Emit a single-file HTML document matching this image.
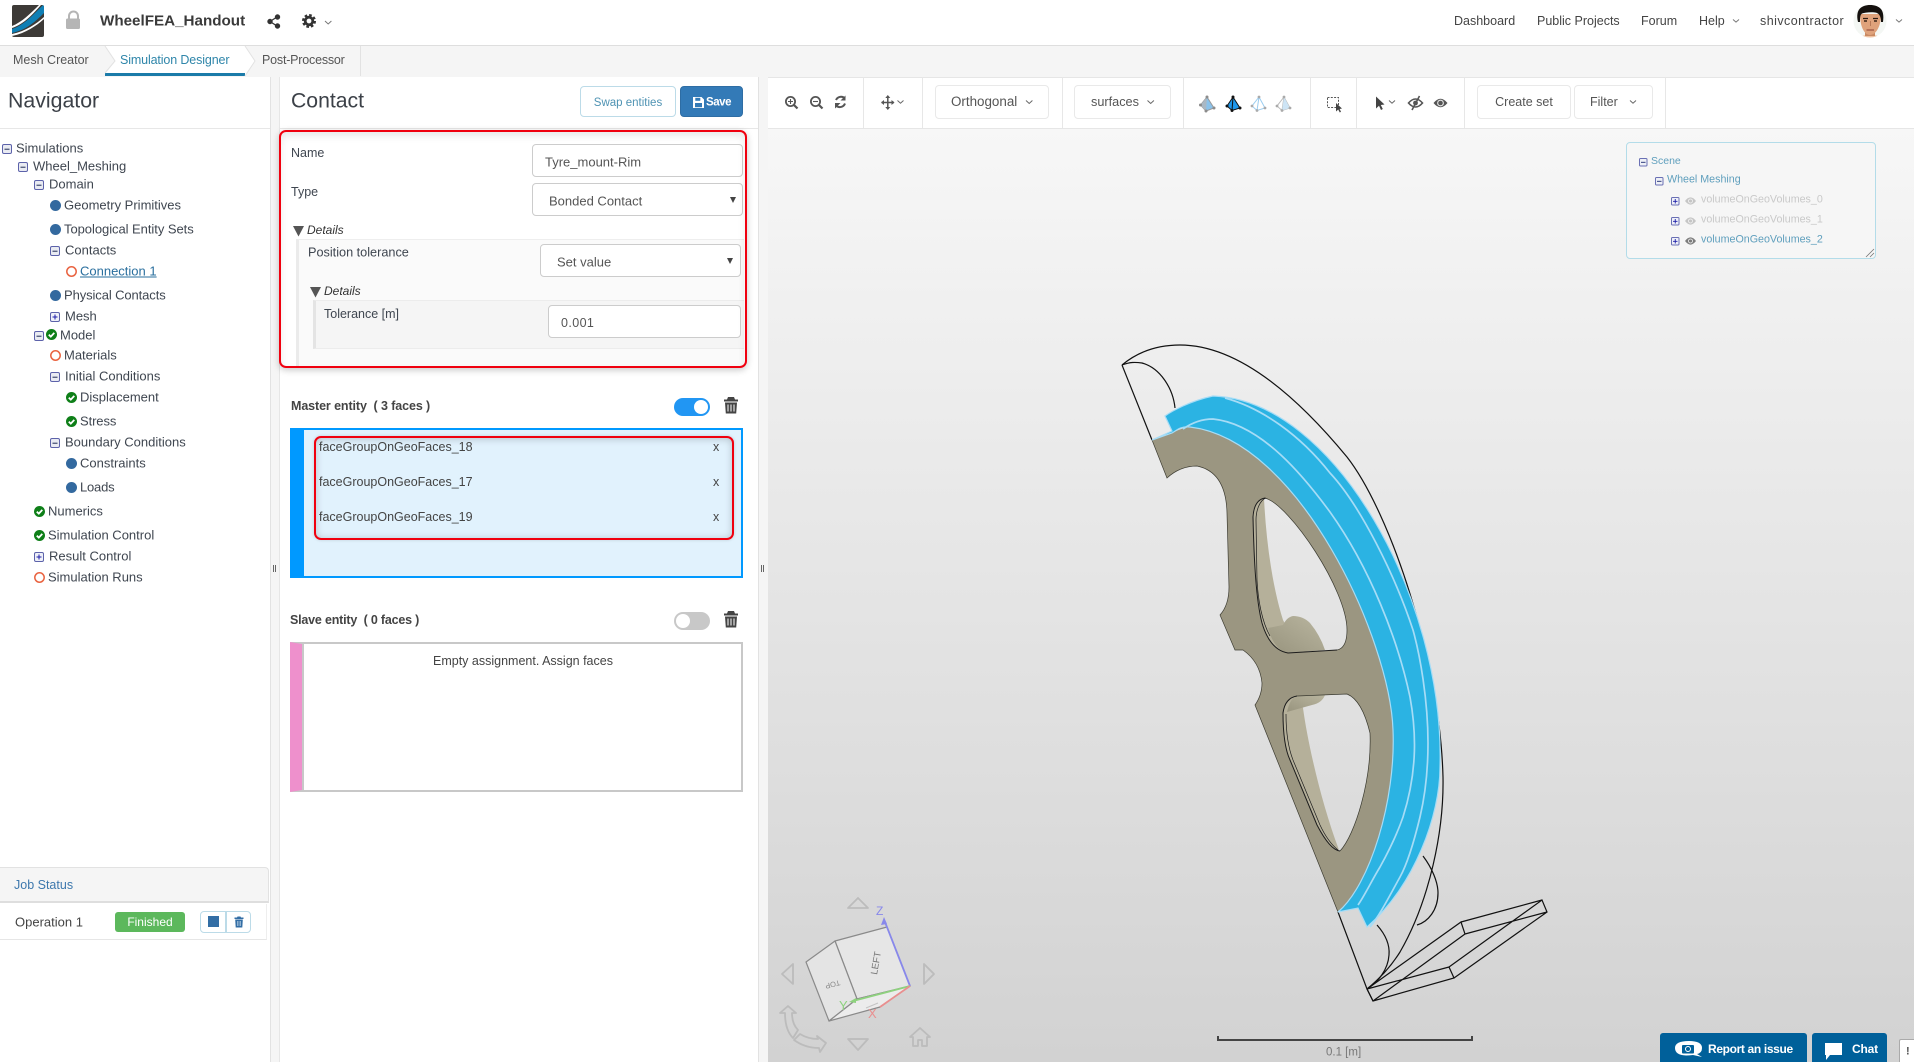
<!DOCTYPE html>
<html><head><meta charset="utf-8"><title>WheelFEA_Handout</title>
<style>
html,body{margin:0;padding:0;width:1914px;height:1062px;overflow:hidden;background:#f5f5f5;font-family:"Liberation Sans",sans-serif;color:#444}
#root{position:absolute;left:0;top:0;width:1914px;height:1062px;overflow:hidden}
.a{position:absolute;box-sizing:border-box}
.t{position:absolute;white-space:nowrap;transform:translateY(-50%);line-height:1;font-size:13px;color:#3f4650}
.h{font-size:12.5px;color:#444}
.inp{position:absolute;box-sizing:border-box;background:#fff;border:1px solid #ccc;border-radius:4px}
.btn{position:absolute;box-sizing:border-box;background:#fff;border:1px solid #e9e9e9;border-radius:4px;font-size:13px;color:#555;text-align:center}
.sep{position:absolute;top:77px;width:1px;height:51px;background:#e7e7e7}
.red{position:absolute;box-sizing:border-box;border:2px solid #f0000f;border-radius:7px}
svg{position:absolute;overflow:visible}
</style></head>
<body>
<div id="root">
<!-- header -->
<div class="a" style="left:0;top:0;width:1914px;height:46px;background:#fff;border-bottom:1px solid #dedede"></div>
<svg style="left:0;top:0" width="1914" height="77">
  <defs>
    <clipPath id="lg"><rect x="12" y="5" width="32" height="32" rx="2"/></clipPath>
    <clipPath id="av"><circle cx="1870" cy="21" r="16.5"/></clipPath>
  </defs>
  <g clip-path="url(#lg)">
    <rect x="12" y="5" width="32" height="32" fill="#3d3a37"/>
    <path d="M12 29 C24 25 32 16 44 4 L44 13 C35 22 26 30 12 33Z" fill="#0f7fb5"/>
    <path d="M12 26 C22 22 30 14 39 5 L41 5 C32 15 24 24 12 28Z" fill="#fff"/>
    <path d="M12 34 C26 31 36 24 44 17 L44 19 C36 26 26 33 12 36Z" fill="#fff"/>
  </g>
  <path d="M69 19 V16 a4.5 4.5 0 0 1 9 0 V19" fill="none" stroke="#b5b5b5" stroke-width="2"/>
  <rect x="66" y="18.5" width="14" height="10.5" rx="1.5" fill="#b5b5b5"/>
  <g fill="#333" stroke="#333">
    <circle cx="277.5" cy="17" r="2.2"/><circle cx="277.5" cy="26" r="2.2"/><circle cx="270" cy="21.5" r="2.2"/>
    <path d="M277 17 L270 21.5 L277 26" fill="none" stroke-width="1.3"/>
  </g>
  <circle cx="309" cy="21" r="3.8" fill="none" stroke="#333" stroke-width="2.8"/>
  <circle cx="309" cy="21" r="5.8" fill="none" stroke="#333" stroke-width="2.4" stroke-dasharray="2.6 1.95"/>
  <path d="M325 21 l3.2 3 l3.2 -3" fill="none" stroke="#777" stroke-width="1"/>
  <path d="M1733 19.5 l3 2.6 l3 -2.6" fill="none" stroke="#777" stroke-width="1"/>
  <path d="M1896 19.5 l3 2.6 l3 -2.6" fill="none" stroke="#777" stroke-width="1"/>
  <!-- avatar -->
  <circle cx="1870" cy="21" r="16.5" fill="#f4f7f4"/>
  <g clip-path="url(#av)">
    <path d="M1855 38 Q1870 32 1885 38 L1885 40 H1855Z" fill="#f0c3a2"/>
    <path d="M1865 30 H1875 V36 H1865Z" fill="#c98a63"/>
    <path d="M1860 14 C1860 28 1865 35 1870 35 C1875 35 1881 28 1881 14 Z" fill="#dfa27b"/>
    <path d="M1858 22 C1855 9 1862 5 1870 5 C1879 5 1885 9 1883 22 L1881 22 C1881 16 1879 13 1875 12.5 C1870 12 1865 12.5 1862 13.5 C1860 15 1860 18 1860 22Z" fill="#15110e"/>
    <path d="M1863 18.5 h5 M1873 18.500 h5" stroke="#2a1b12" stroke-width="1.3"/>
    <path d="M1864 21 h3 M1874 21 h3" stroke="#3a2518" stroke-width="1.4"/>
    <path d="M1870.500 21 V26" stroke="#b87a58" stroke-width="1"/>
    <path d="M1866.500 30 h7.500" stroke="#9c5442" stroke-width="1.2"/>
  </g>
</svg>
<div class="t" style="left:100px;top:21px;font-size:15.2px;font-weight:bold;color:#3a3a3a">WheelFEA_Handout</div>
<div class="t h" style="left:1454px;top:21px">Dashboard</div>
<div class="t h" style="left:1537px;top:21px">Public Projects</div>
<div class="t h" style="left:1641px;top:21px">Forum</div>
<div class="t h" style="left:1699px;top:21px">Help</div>
<div class="t h" style="left:1760px;top:21px;letter-spacing:.45px">shivcontractor</div>

<!-- tabs -->
<div class="a" style="left:105px;top:46px;width:140px;height:30px;background:#fff;border-bottom:3px solid #1b7ba9"></div>
<svg style="left:0;top:46px" width="380" height="30">
  <path d="M105 0 L115 15 L105 27" fill="#f5f5f5" stroke="#e2e2e2"/>
  <path d="M245 0 L255 15 L245 30" fill="#fff" stroke="#e2e2e2"/>
  <path d="M360.5 0 V30" stroke="#e2e2e2"/>
</svg>
<div class="t" style="left:13px;top:60px;font-size:12.5px;color:#555">Mesh Creator</div>
<div class="t" style="left:120px;top:60px;font-size:12.5px;color:#2f86aa;letter-spacing:-.13px">Simulation Designer</div>
<div class="t" style="left:262px;top:60px;font-size:12.5px;color:#555;letter-spacing:-.2px">Post-Processor</div>

<!-- navigator panel -->
<div class="a" style="left:0;top:77px;width:271px;height:985px;background:#fff;border-right:1px solid #e2e2e2"></div>
<div class="a" style="left:0;top:128px;width:270px;height:1px;background:#e7e7e7"></div>
<div class="t" style="left:8px;top:101px;font-size:21.3px;color:#3c4148">Navigator</div>

<svg style="left:0;top:0" width="280" height="600">
<defs>
  <g id="mn"><rect x="0.5" y="0.5" width="9" height="9" rx="1.5" fill="#e9ebf2" stroke="#5c62aa"/><path d="M2.5 5.2 H7.5" stroke="#1e2a55" stroke-width="1"/></g>
  <g id="pl"><rect x="0.5" y="0.5" width="9" height="9" rx="1.5" fill="#eef0f8" stroke="#5c62aa"/><path d="M2.5 5 H7.5 M5 2.5 V7.5" stroke="#1c1ca8" stroke-width="1"/></g>
  <circle id="dot" cx="5.5" cy="5.5" r="5.5" fill="#33699f"/>
  <g id="ok"><circle cx="5.5" cy="5.5" r="5.5" fill="#0e7f18"/><path d="M2.8 5.7 L4.800 7.600 L8.300 3.900" fill="none" stroke="#fff" stroke-width="1.8"/></g>
  <circle id="rg" cx="5.5" cy="5.5" r="4.7" fill="none" stroke="#e9623f" stroke-width="1.5"/>
</defs>
<use href="#mn" x="2" y="144"/>
<use href="#mn" x="18" y="162"/>
<use href="#mn" x="34" y="180"/>
<use href="#dot" x="50" y="200"/>
<use href="#dot" x="50" y="224"/>
<use href="#mn" x="50" y="246"/>
<use href="#rg" x="66" y="266"/>
<use href="#dot" x="50" y="290"/>
<use href="#pl" x="50" y="312"/>
<use href="#mn" x="34" y="331"/>
<use href="#ok" x="46" y="329"/>
<use href="#rg" x="50" y="350"/>
<use href="#mn" x="50" y="372"/>
<use href="#ok" x="66" y="392"/>
<use href="#ok" x="66" y="416"/>
<use href="#mn" x="50" y="438"/>
<use href="#dot" x="66" y="458"/>
<use href="#dot" x="66" y="482"/>
<use href="#ok" x="34" y="506"/>
<use href="#ok" x="34" y="530"/>
<use href="#pl" x="34" y="552"/>
<use href="#rg" x="34" y="572"/>
</svg>
<div class="t" style="left:16px;top:148px">Simulations</div>
<div class="t" style="left:33px;top:166px">Wheel_Meshing</div>
<div class="t" style="left:49px;top:184px">Domain</div>
<div class="t" style="left:64px;top:205px">Geometry Primitives</div>
<div class="t" style="left:64px;top:229px;letter-spacing:-.05px">Topological Entity Sets</div>
<div class="t" style="left:65px;top:250px">Contacts</div>
<div class="t" style="left:80px;top:271px;color:#2a6f9e;text-decoration:underline">Connection 1</div>
<div class="t" style="left:64px;top:295px;letter-spacing:-.1px">Physical Contacts</div>
<div class="t" style="left:65px;top:316px">Mesh</div>
<div class="t" style="left:60px;top:335px">Model</div>
<div class="t" style="left:64px;top:355px">Materials</div>
<div class="t" style="left:65px;top:376px">Initial Conditions</div>
<div class="t" style="left:80px;top:397px">Displacement</div>
<div class="t" style="left:80px;top:421px;letter-spacing:-.1px">Stress</div>
<div class="t" style="left:65px;top:442px">Boundary Conditions</div>
<div class="t" style="left:80px;top:463px">Constraints</div>
<div class="t" style="left:80px;top:487px;letter-spacing:-.2px">Loads</div>
<div class="t" style="left:48px;top:511px">Numerics</div>
<div class="t" style="left:48px;top:535px">Simulation Control</div>
<div class="t" style="left:49px;top:556px">Result Control</div>
<div class="t" style="left:48px;top:577px">Simulation Runs</div>

<!-- job status -->
<div class="a" style="left:0;top:867px;width:269px;height:36px;background:#f5f5f5;border:1px solid #e2e2e2;border-left:0;border-bottom:2px solid #dedede;border-top-right-radius:4px"></div>
<div class="t" style="left:14px;top:885px;font-size:12.5px;color:#3d78ad">Job Status</div>
<div class="a" style="left:0;top:904px;width:267px;height:36px;border-right:1px solid #eee;border-bottom:1px solid #e6e6e6"></div>
<div class="t" style="left:15px;top:922px;font-size:13px;color:#444">Operation 1</div>
<div class="a" style="left:115px;top:912px;width:70px;height:20px;background:#5cb85c;border-radius:3px;color:#fff;font-size:12px;text-align:center;line-height:21px">Finished</div>
<div class="a" style="left:200px;top:911px;width:26px;height:22px;border:1px solid #bcdbe8;border-radius:4px 0 0 4px;background:#fff"></div>
<div class="a" style="left:226px;top:911px;width:25px;height:22px;border:1px solid #bcdbe8;border-radius:0 4px 4px 0;background:#fff"></div>
<div class="a" style="left:208px;top:916px;width:11px;height:11px;background:#336ea5"></div>
<svg style="left:234px;top:916px" width="10" height="12"><path d="M3 1.5 L3.5 0.5 H6.5 L7 1.5 H9.5 V3 H.5 V1.5Z M1.2 3.5 H8.8 L8.3 11.5 H1.7Z" fill="#336ea5"/><path d="M3.5 5 V10 M5 5 V10 M6.5 5 V10" stroke="#cfe0ee" stroke-width=".6"/></svg>

<!-- splitter handles -->
<svg style="left:0;top:0" width="780" height="600">
  <path d="M273.5 565 V572 M275.500 565 V572 M761.5 565 V572 M763.5 565 V572" stroke="#666" stroke-width="1"/>
</svg>

<!-- contact panel -->
<div class="a" style="left:279px;top:77px;width:480px;height:985px;background:#fff;border-left:1px solid #e6e6e6;border-right:1px solid #e2e2e2"></div>
<div class="a" style="left:280px;top:128px;width:478px;height:1px;background:#e7e7e7"></div>
<div class="t" style="left:291px;top:101px;font-size:21.2px;color:#3c4148">Contact</div>
<div class="btn" style="left:580px;top:86px;width:96px;height:31px;border:1px solid #bcdbe8;font-size:11.5px;line-height:32px;color:#4f93b3">Swap entities</div>
<div class="a" style="left:680px;top:86px;width:63px;height:31px;background:#337ab7;border-radius:4px;border:1px solid #2e6da4"></div>
<svg style="left:693px;top:97px" width="11" height="11"><path d="M0 0 H8.5 L11 2.5 V11 H0Z" fill="#fff"/><rect x="2.3" y="0.8" width="5" height="3" fill="#337ab7"/><rect x="2" y="6" width="7" height="4.2" fill="#337ab7"/></svg>
<div class="t" style="left:706px;top:103px;font-size:11.5px;color:#fff;font-weight:bold;letter-spacing:-.45px">Save</div>

<!-- form -->
<div class="a" style="left:296px;top:239px;width:448px;height:128px;background:#fafafa;border-top:1px solid #eee;border-left:3px solid #ebebeb"></div>
<div class="a" style="left:313px;top:300px;width:431px;height:49px;background:#f5f5f5;border-top:1px solid #ececec;border-bottom:1px solid #ececec;border-left:3px solid #e4e4e4"></div>
<div class="t" style="left:291px;top:153px;font-size:12.5px">Name</div>
<div class="inp" style="left:532px;top:144px;width:211px;height:33px"></div>
<div class="t" style="left:545px;top:162px;font-size:13px;color:#555">Tyre_mount-Rim</div>
<div class="t" style="left:291px;top:192px;font-size:12.5px">Type</div>
<div class="inp" style="left:532px;top:183px;width:211px;height:33px"></div>
<div class="t" style="left:549px;top:201px;font-size:13px;color:#555">Bonded Contact</div>
<svg style="left:0;top:0" width="780" height="360">
  <path d="M730 197 h6 l-3 6z" fill="#444"/>
  <path d="M293 226 h11 l-5.5 10.5z" fill="#555"/>
  <path d="M310 287 h11 l-5.5 10.5z" fill="#555"/>
</svg>
<div class="t" style="left:307px;top:230px;font-size:12px;font-style:italic;color:#333">Details</div>
<div class="t" style="left:308px;top:253px;font-size:12.7px">Position tolerance</div>
<div class="inp" style="left:540px;top:244px;width:201px;height:33px"></div>
<div class="t" style="left:557px;top:262px;font-size:13px;color:#555">Set value</div>
<svg style="left:0;top:0" width="780" height="360"><path d="M727 258 h6 l-3 6z" fill="#444"/></svg>
<div class="t" style="left:324px;top:291px;font-size:12px;font-style:italic;color:#333">Details</div>
<div class="t" style="left:324px;top:314px;font-size:12.5px">Tolerance [m]</div>
<div class="inp" style="left:548px;top:305px;width:193px;height:33px"></div>
<div class="t" style="left:561px;top:323px;font-size:12.5px;color:#555;letter-spacing:.4px">0.001</div>
<div class="red" style="left:279px;top:130px;width:468px;height:238px;box-shadow:0 2px 7px rgba(0,0,0,.22),inset 0 4px 8px rgba(0,0,0,.09)"></div>

<!-- master -->
<div class="t" style="left:291px;top:406px;font-size:12.5px;font-weight:bold;color:#444;letter-spacing:-.1px">Master entity &nbsp;( 3 faces )</div>
<div class="a" style="left:674px;top:398px;width:36px;height:18px;border-radius:9px;background:#2196f3"></div>
<div class="a" style="left:694px;top:400px;width:14px;height:14px;border-radius:50%;background:#fff"></div>
<svg style="left:0;top:0" width="780" height="640">
  <g id="tr"><path d="M727 399.5 L728 397 H734 L735 399.5 H738 V401.5 H724 V399.5Z M725 402.5 H737 L736.2 413.5 H725.8Z" fill="#444"/><path d="M728 404.5 V411.5 M731 404.5 V411.5 M734 404.5 V411.5" stroke="#fff" stroke-width="1"/></g>
  <use href="#tr" x="0" y="214"/>
</svg>
<div class="a" style="left:290px;top:428px;width:453px;height:150px;background:#e1f2fd;border:2px solid #0099ff;border-left:14px solid #0099ff"></div>
<div class="t" style="left:319px;top:447px;font-size:12.5px;color:#444">faceGroupOnGeoFaces_18</div>
<div class="t" style="left:319px;top:482px;font-size:12.5px;color:#444">faceGroupOnGeoFaces_17</div>
<div class="t" style="left:319px;top:517px;font-size:12.5px;color:#444">faceGroupOnGeoFaces_19</div>
<div class="t" style="left:713px;top:447px;font-size:12.5px;color:#444">x</div>
<div class="t" style="left:713px;top:482px;font-size:12.5px;color:#444">x</div>
<div class="t" style="left:713px;top:517px;font-size:12.5px;color:#444">x</div>
<div class="red" style="left:314px;top:436px;width:420px;height:104px;box-shadow:inset 0 1px 8px rgba(0,0,0,.2),0 0 3px rgba(0,0,0,.15)"></div>

<!-- slave -->
<div class="t" style="left:290px;top:620px;font-size:12.5px;font-weight:bold;color:#444;letter-spacing:-.2px">Slave entity &nbsp;( 0 faces )</div>
<div class="a" style="left:674px;top:612px;width:36px;height:18px;border-radius:9px;background:#c8c8c8"></div>
<div class="a" style="left:676px;top:614px;width:14px;height:14px;border-radius:50%;background:#fff"></div>
<div class="a" style="left:290px;top:642px;width:453px;height:150px;background:#fff;border:2px solid #c8c8c8;border-left:12px solid #ee90cc"></div>
<div class="a" style="left:302px;top:642px;width:2px;height:150px;background:#c8c8c8"></div>
<div class="t" style="left:433px;top:661px;font-size:12.5px;color:#444">Empty assignment. Assign faces</div>

<!-- viewer -->
<div class="a" style="left:768px;top:77px;width:1146px;height:52px;background:#fff;border-top:1px solid #e6e6e6;border-bottom:1px solid #e6e6e6"></div>
<div class="a" style="left:768px;top:129px;width:1146px;height:933px;background:linear-gradient(#f7f7f7,#d2d2d2)"></div>
<div class="sep" style="left:863px"></div><div class="sep" style="left:922px"></div><div class="sep" style="left:1062px"></div><div class="sep" style="left:1183px"></div><div class="sep" style="left:1310px"></div><div class="sep" style="left:1356px"></div><div class="sep" style="left:1464px"></div><div class="sep" style="left:1665px"></div>
<div class="btn" style="left:935px;top:85px;width:114px;height:34px;line-height:32px;text-align:left;padding-left:15px;font-size:13.4px">Orthogonal</div>
<div class="btn" style="left:1074px;top:85px;width:97px;height:34px;line-height:32px;text-align:left;padding-left:16px;font-size:12.7px">surfaces</div>
<div class="btn" style="left:1477px;top:85px;width:94px;height:34px;line-height:32px;font-size:12.5px">Create set</div>
<div class="btn" style="left:1574px;top:85px;width:79px;height:34px;line-height:32px;text-align:left;padding-left:15px;font-size:12.5px">Filter</div>
<svg style="left:0;top:0" width="1914" height="130">
  <g fill="none" stroke="#555" stroke-width="1.8">
    <circle cx="790.5" cy="101.5" r="4.6"/><path d="M794 105 L797.5 108.5" stroke-width="2.2"/><path d="M788 101.500 h5 M790.5 99 v5" stroke-width="1.1"/>
    <circle cx="815.5" cy="101.5" r="4.6"/><path d="M819 105 L822.5 108.5" stroke-width="2.2"/><path d="M813 101.5 h5" stroke-width="1.1"/>
    <path d="M836 100 a5.5 5.5 0 0 1 9 -1.5 M845 103.5 a5.5 5.5 0 0 1 -9 2" stroke-width="2"/>
  </g>
  <path d="M845.5 95.5 V100.5 H840.5Z M835 108.5 V103 H840.5Z" fill="#555"/>
  <g stroke="#555" stroke-width="1.5" fill="#555">
    <path d="M881.5 102.5 H894 M887.8 96 V109" fill="none"/>
    <path d="M887.8 95 l-2.500 3 h5z M887.8 110 l-2.500 -3 h5z M881 102.5 l3 -2.5 v5z M894.5 102.5 l-3 -2.5 v5z" stroke="none"/>
  </g>
  <g fill="none" stroke="#666" stroke-width="1">
    <path d="M897.5 100.5 l3 2.7 l3 -2.7"/>
    <path d="M1026 100.5 l3.2 3 l3.2 -3"/>
    <path d="M1147.5 100.5 l3.2 3 l3.2 -3"/>
    <path d="M1630 100.5 l3 2.7 l3 -2.7"/>
    <path d="M1389 100.5 l3 2.7 l3 -2.7"/>
  </g>
  <!-- tetra view icons -->
  <path d="M1207 97 L1200.500 105 L1206 111 L1214 108Z" fill="#8bc2ea" stroke="#9a9a9a"/>
  <path d="M1207 97 L1200.500 105 L1206 111Z" fill="#aab8c4"/>
  <g fill="#8c8c8c"><circle cx="1207" cy="97" r="1.5"/><circle cx="1200.500" cy="105" r="1.5"/><circle cx="1214" cy="108" r="1.5"/><circle cx="1206" cy="111" r="1.5"/></g>
  <path d="M1233 97 L1227 106 L1232 110.500 L1240 108Z" fill="#1f97ea" stroke="#111"/>
  <path d="M1233 97 L1232 110.500" stroke="#111" fill="none"/>
  <g fill="#111"><circle cx="1233" cy="97" r="1.5"/><circle cx="1227" cy="106" r="1.5"/><circle cx="1240" cy="108" r="1.5"/><circle cx="1232" cy="110.5" r="1.5"/></g>
  <path d="M1259 97 L1252 106 L1257 110.5 L1265 108Z M1259 97 L1257 110.5" fill="none" stroke="#9bcdf0"/>
  <g fill="#aaa"><circle cx="1259" cy="97" r="1.4"/><circle cx="1252" cy="106" r="1.4"/><circle cx="1265" cy="108" r="1.4"/><circle cx="1257" cy="110.5" r="1.4"/></g>
  <path d="M1284 97 L1277 106 L1282 110.5 L1290 108Z M1284 97 L1282 110.5" fill="none" stroke="#b9b9b9"/>
  <path d="M1284 97 L1290 108 L1282 110.5Z" fill="#cde4f5"/>
  <g fill="#aaa"><circle cx="1284" cy="97" r="1.4"/><circle cx="1277" cy="106" r="1.4"/><circle cx="1290" cy="108" r="1.4"/><circle cx="1282" cy="110.5" r="1.4"/></g>
  <!-- select -->
  <rect x="1327.5" y="97.5" width="11" height="10" fill="none" stroke="#555" stroke-dasharray="2 1.3"/>
  <path d="M1336 103 L1336 111.5 L1338.2 109.5 L1339.8 112.5 L1341 111.8 L1339.6 109 L1342 108.5Z" fill="#444"/>
  <path d="M1376 96.5 V108.5 L1379 105.8 L1381 110 L1382.8 109 L1380.8 105 L1384.5 104.5Z" fill="#444"/>
  <!-- eyes -->
  <path d="M1408.5 103 Q1415.5 95 1422.5 103 Q1415.5 111 1408.5 103Z" fill="none" stroke="#555" stroke-width="1.6"/>
  <circle cx="1415.5" cy="103" r="2.4" fill="#555"/>
  <path d="M1419.5 96 L1412 110" stroke="#555" stroke-width="1.6"/>
  <path d="M1433.5 103 Q1440.5 94.5 1447.5 103 Q1440.5 111.5 1433.5 103Z" fill="#555"/>
  <circle cx="1440.5" cy="103" r="3.4" fill="#e8e8e8"/><circle cx="1440.5" cy="103" r="2.3" fill="#555"/>
</svg>

<!-- scene tree -->
<div class="a" style="left:1626px;top:142px;width:250px;height:117px;border:1px solid #b3dce9;border-radius:4px;background:#f6f6f6"></div>
<div class="t" style="left:1651px;top:161px;font-size:10.5px;color:#5f9fbd">Scene</div>
<div class="t" style="left:1667px;top:180px;font-size:10.7px;color:#5f9fbd">Wheel Meshing</div>
<div class="t" style="left:1701px;top:200px;font-size:10.7px;color:#c9c9c9">volumeOnGeoVolumes_0</div>
<div class="t" style="left:1701px;top:220px;font-size:10.7px;color:#c9c9c9">volumeOnGeoVolumes_1</div>
<div class="t" style="left:1701px;top:240px;font-size:10.7px;color:#5f9fbd">volumeOnGeoVolumes_2</div>
<svg style="left:0;top:0" width="1914" height="270">
  <defs>
    <g id="sm"><rect x=".5" y=".5" width="7.5" height="7.5" rx="1" fill="#eef0f6" stroke="#6a70b4"/><path d="M2 4.3 H6.5" stroke="#1c2a70" stroke-width=".9"/></g>
    <g id="sp"><rect x=".5" y=".5" width="7.5" height="7.5" rx="1" fill="#eef0f8" stroke="#6a70b4"/><path d="M2 4.3 H6.5 M4.25 2 V6.5" stroke="#1c1ca8" stroke-width=".9"/></g>
    <g id="ey"><path d="M0 4 Q5.5 -3.2 11 4 Q5.5 11.200 0 4Z" fill="currentColor"/><circle cx="5.5" cy="4" r="2.4" fill="#f4f4f4"/><circle cx="5.5" cy="4" r="1.6" fill="currentColor"/></g>
  </defs>
  <use href="#sm" x="1639" y="158"/>
  <use href="#sm" x="1655" y="177"/>
  <use href="#sp" x="1671" y="197"/>
  <use href="#sp" x="1671" y="217"/>
  <use href="#sp" x="1671" y="237"/>
  <use href="#ey" x="1685" y="197" style="color:#c6c6c6"/>
  <use href="#ey" x="1685" y="217" style="color:#c6c6c6"/>
  <use href="#ey" x="1685" y="237" style="color:#7d7d7d"/>
  <path d="M1866 257 L1874 249 M1870 257 L1874 253" stroke="#777" stroke-width=".8"/>
</svg>

<!-- wheel -->
<svg style="left:0;top:0" width="1914" height="1062">
  <defs>
    <linearGradient id="hub" x1="0" y1="1" x2="1" y2="0"><stop offset="0" stop-color="#98947e"/><stop offset="1" stop-color="#bab6a0"/></linearGradient>
  </defs>
  <!-- wireframe -->
  <g fill="none" stroke="#111" stroke-width="1.2">
    <path d="M1122 365 C1140 350 1160 345 1180 345 C1240 345 1300 400 1347 457 C1390 512 1440 660 1443 777 C1444 830 1430 900 1400 952 C1390 968 1378 980 1367 989"/>
    <path d="M1122 365 C1130 362 1135 362 1142 363 C1160 368 1173 388 1175 408"/>
    <path d="M1122 365 L1152 440"/>
    <path d="M1338 912 L1367 989 L1373 1001"/>
    <path d="M1423 856 C1432 868 1438 882 1438 893 C1438 910 1428 922 1417 925"/>
    <path d="M1377 925 C1385 934 1390 944 1389 955 C1388 970 1378 982 1367 989"/>
    <path d="M1367 989 L1373 1001 L1454 978 L1449 967 L1367 989 M1367 989 L1461 922 L1465 934 L1373 1001 M1449 967 L1542 900 L1547 912 L1454 978 M1461 922 L1542 900 M1465 934 L1547 912"/>
  </g>
  <!-- tan face with holes -->
  <path fill-rule="evenodd" fill="#9b9681" d="M1152 440 L1172 433 C1176 431 1182 428 1190 427 C1300 440 1390 640 1393 730 C1396 800 1370 885 1338 912 L1255 705 Q1262 695 1262 683 Q1260 662 1243 650 L1235 650 L1220 615 Q1229 605 1229 587 L1227 513 Q1226 472 1197 466 Q1180 466 1167 478 Z
   M1265 498 C1290 505 1347 590 1347 630 Q1347 648 1337 650 L1288 653 Q1270 650 1262 623 C1256 600 1254 560 1253 517 Q1254 500 1265 498Z
   M1297 696 L1347 694 Q1362 700 1370 733 C1372 780 1355 835 1340 851 Q1330 850 1317 825 L1290 760 Q1283 745 1283 713 Q1285 698 1297 696Z"/>
  <!-- inner walls -->
  <path fill="#b5b09a" d="M1264 498 C1266 540 1272 585 1283 620 L1300 652 L1288 653 Q1270 650 1262 623 C1256 600 1254 560 1253 517 Q1254 500 1264 498Z"/>
  <path fill="url(#hub)" d="M1268 628 L1283 625 Q1287 617 1293 616 Q1303 616 1310 623 Q1320 635 1325 650 L1288 653 Q1274 650 1268 628Z"/>
  <path fill="#b5b09a" d="M1303 708 C1308 745 1322 805 1339 850 Q1330 850 1317 825 L1290 760 Q1283 745 1283 713 Q1285 698 1297 696Z"/>
  <path fill="url(#hub)" d="M1287 712 Q1290 698 1297 696 L1325 695 Q1322 703 1312 705Z"/>
  <g fill="none" stroke="#1c1c1c" stroke-width="1">
    <path d="M1337 650 L1288 653 Q1270 650 1262 623 C1256 600 1254 560 1253 517 Q1254 500 1265 498"/>
    <path d="M1265 498 C1290 505 1347 590 1347 630 Q1347 648 1337 650" stroke="#3a3a30" stroke-width=".7"/>
    <path d="M1266 498 C1260 500 1256 510 1256 520 L1257 580 C1258 600 1262 622 1270 636" stroke-width=".7"/>
    <path d="M1340 851 Q1330 850 1317 825 L1290 760 Q1283 745 1283 713 Q1285 698 1297 696"/>
    <path d="M1297 696 L1347 694 Q1362 700 1370 733 C1372 780 1355 835 1340 851" stroke="#3a3a30" stroke-width=".7"/>
    <path d="M1286 714 Q1286 742 1293 760 L1320 825 Q1328 842 1338 850" stroke-width=".7"/>
    <path d="M1338 912 L1255 705 Q1262 695 1262 683 Q1260 662 1243 650 L1235 650 L1220 615 Q1229 605 1229 587 L1227 513 Q1226 472 1197 466 Q1180 466 1167 478 L1152 440" stroke-width=".7" stroke="#3d3c32"/>
  </g>
  <!-- blue band -->
  <path fill="#2bb3e3" stroke="#a6dcf6" stroke-width="1.2" d="M1152 440 L1172 431 L1165 416 C1172 411 1190 401 1213 396 C1335 400 1445 600 1440 767 C1440 815 1415 885 1367 927 L1358 908 L1338 912 C1370 885 1396 800 1393 730 C1390 640 1300 440 1190 427 C1180 426 1176 431 1172 433 Z"/>
  <path fill="none" stroke="#a6dcf6" stroke-width="1.7" d="M1183 429 C1193 422 1204 419 1213 419 C1262 424 1305 478 1330 512 C1370 568 1398 640 1410 697 C1416 730 1418 770 1403 817 C1395 840 1385 858 1380 867 C1372 880 1365 895 1358 905"/>
  <path fill="none" stroke="#a6dcf6" stroke-width="1.7" d="M1225 398 C1262 408 1300 435 1330 473 C1360 505 1395 575 1413 630 C1420 655 1428 700 1428 743 C1428 775 1424 800 1420 817 C1412 850 1405 868 1400 877 C1390 895 1380 915 1370 927"/>
</svg>

<!-- scale -->
<div class="a" style="left:1217px;top:1039px;width:256px;height:2px;background:#444"></div>
<div class="a" style="left:1217px;top:1036px;width:2px;height:5px;background:#444"></div>
<div class="a" style="left:1471px;top:1036px;width:2px;height:5px;background:#444"></div>
<div class="t" style="left:1326px;top:1053px;font-size:11.5px;color:#777">0.1 [m]</div>

<!-- view cube -->
<svg style="left:0;top:0" width="1000" height="1062">
  <g stroke-linejoin="round">
    <path d="M835 941 L887 927 L910 986 L857 999Z" fill="#e6e6e6" stroke="#8a8a8a" stroke-width="1.2"/>
    <path d="M806 962 L835 941 L857 999 L829 1021Z" fill="#e4e4e4" stroke="#8a8a8a" stroke-width="1.2"/>
    <path d="M829 1021 L857 999 L910 986 L880 1007Z" fill="#ececec" stroke="#8a8a8a" stroke-width="1.2"/>
  </g>
  <text transform="translate(877,975) rotate(-80)" font-family="Liberation Sans" font-size="9.500" fill="#777">LEFT</text>
  <text transform="translate(832,982) rotate(165)" font-family="Liberation Sans" font-size="7.500" fill="#888" text-anchor="middle">TOP</text>
  <path d="M866 1008 L878 1003" stroke="#c4c4c4"/>
  <path d="M910 986 L885 922" stroke="#8888ea" stroke-width="1.8"/><path d="M884 917 L881 925 L887 924Z" fill="#8888ea"/>
  <path d="M910 986 L853 1001" stroke="#8ed27e" stroke-width="1.8"/><path d="M849 1002 L856 998 L856 1003Z" fill="#8ed27e"/>
  <path d="M910 986 L880 1007" stroke="#e98f8f" stroke-width="1.8"/>
  <text x="876" y="915" font-family="Liberation Sans" font-size="12" fill="#8888ea">Z</text>
  <text x="839" y="1010" font-family="Liberation Sans" font-size="13" fill="#8ed27e">Y</text>
  <text x="868" y="1018" font-family="Liberation Sans" font-size="13" fill="#e98f8f">X</text>
  <g fill="none" stroke="#bcbcbc" stroke-width="1.8" stroke-linejoin="round">
    <path d="M848 908 L868 908 L858 898Z"/>
    <path d="M793 964 L793 984 L782 974Z"/>
    <path d="M924 964 L924 984 L934 974Z"/>
    <path d="M848 1039 L868 1039 L858 1050Z"/>
    <path d="M910 1037 L920 1028 L930 1037 L927 1037 L927 1046 L922 1046 L922 1040 L918 1040 L918 1046 L913 1046 L913 1037Z"/>
    <path d="M788 1006 L796 1013 L792 1013 Q792 1024 798 1030 L793 1038 Q785 1030 785 1013 L780 1013Z"/>
    <path d="M826 1043 L817 1036 L818 1039 Q808 1039 800 1034 L794 1040 Q805 1048 819 1048 L820 1052Z"/>
  </g>
</svg>

<!-- feedback buttons -->
<div class="a" style="left:1660px;top:1033px;width:147px;height:29px;background:#00609a;border-radius:3px 3px 0 0"></div>
<div class="a" style="left:1812px;top:1033px;width:75px;height:29px;background:#00609a;border-radius:3px 3px 0 0"></div>
<svg style="left:0;top:0" width="1914" height="1062">
  <path d="M1675 1048 Q1675 1041 1689 1041 Q1702 1041 1702 1048 Q1702 1053 1697 1054 L1702 1057 L1693 1055 Q1689 1055.5 1686 1055.5 Q1675 1055 1675 1048Z" fill="#fff"/>
  <rect x="1682" y="1045" width="12" height="8.5" rx="1" fill="#00609a"/>
  <circle cx="1688" cy="1049" r="2.5" fill="#00609a" stroke="#fff"/>
  <path d="M1825 1043 H1842 V1055 H1830 L1826 1060 V1055 H1825Z" fill="#fff"/>
</svg>
<div class="t" style="left:1708px;top:1049px;font-size:12px;font-weight:bold;color:#fff;letter-spacing:-.35px">Report an issue</div>
<div class="t" style="left:1852px;top:1049px;font-size:12px;font-weight:bold;color:#fff;letter-spacing:-.2px">Chat</div>
<div class="a" style="left:1899px;top:1039px;width:15px;height:23px;background:#fff;border:1px solid #aaa;border-right:0;border-bottom:0;border-radius:2px 0 0 0"></div>
<div class="t" style="left:1906px;top:1052px;font-size:11px;font-weight:bold;color:#555">!</div>
</div>
</body></html>
